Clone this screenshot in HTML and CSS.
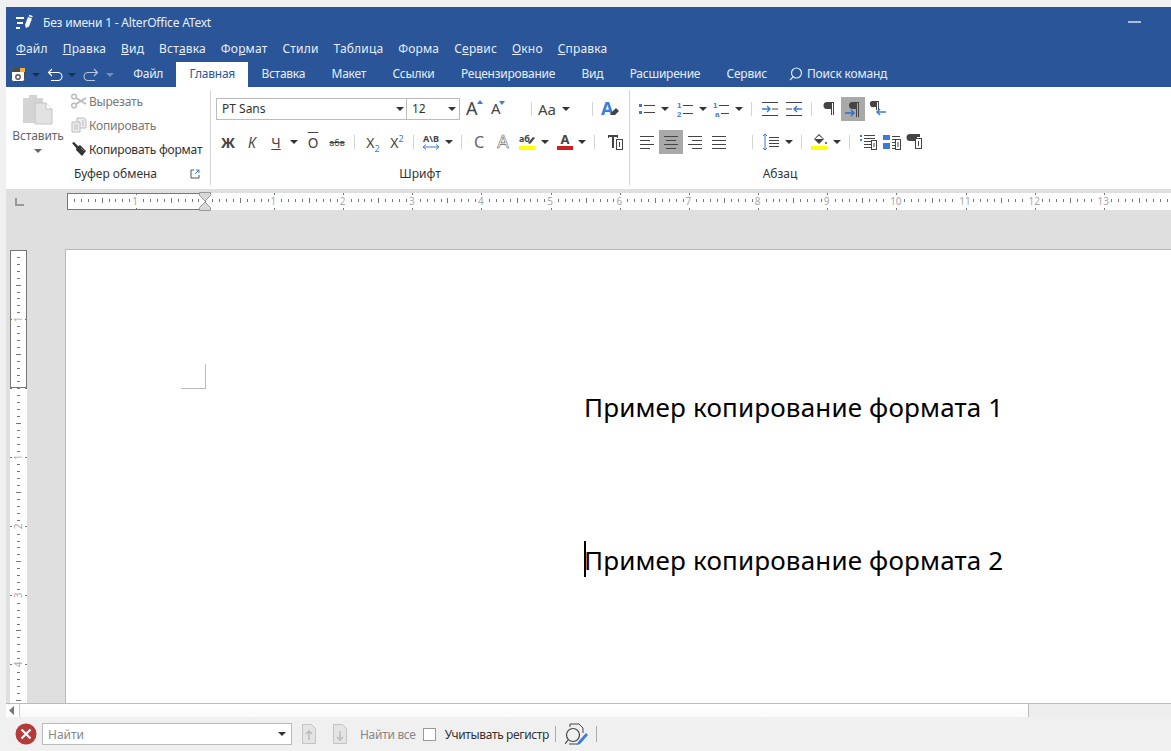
FILE: index.html
```html
<!DOCTYPE html>
<html lang="ru">

  <head>
    <meta charset="UTF-8">
    <title>Без имени 1 - AlterOffice AText</title>
    <link rel="stylesheet" href="styles.css">
  </head>

  <body>
    <svg class="defs" width="0" height="0">
      <symbol id="caret" viewBox="0 0 12 22"><path d="M2 9h8l-4 4z" fill="#333"/></symbol>
    </svg>

    <div class="chrome">
      <div class="titlebar">
        <svg class="logo" width="18" height="17" viewBox="0 0 18 17">
          <path d="M0 4h8M1 9h6M0 14h4" stroke="#fff" stroke-width="2"/>
          <path d="M9 11l3-8 4 1.500-3 8-3 1.500z" fill="#fff"/>
          <path d="M13 1.500l3.500 1.300" stroke="#fff" stroke-width="1.500"/>
        </svg>
        <span class="title">Без имени 1 - AlterOffice AText</span>
        <span class="minimize"></span>
      </div>
      <div class="menubar">
        <span><u>Ф</u>айл</span>
        <span><u>П</u>равка</span>
        <span><u>В</u>ид</span>
        <span>Вст<u>а</u>вка</span>
        <span>Фо<u>р</u>мат</span>
        <span>Стили</span>
        <span>Таблица</span>
        <span>Форма</span>
        <span>С<u>е</u>рвис</span>
        <span><u>О</u>кно</span>
        <span><u>С</u>правка</span>
      </div>
      <div class="tabbar">
        <div class="quick">
          <svg class="save" width="14" height="14" viewBox="0 0 14 14">
            <rect x="0.5" y="0.5" width="13" height="13" rx="2" fill="#fff" stroke="#4a4a4a"/>
            <path d="M1 1h12v3H1z" fill="#4a4a4a"/>
            <path d="M9 0h5v4H9z" fill="#f0b040"/>
            <circle cx="7" cy="9" r="2.200" fill="none" stroke="#555" stroke-width="1.400"/>
          </svg>
          <svg class="qcaret" width="8" height="4" viewBox="0 0 8 4"><path d="M0 0h8L4 4z" fill="#1d2f4d"/></svg>
          <svg width="16" height="14" viewBox="0 0 16 14">
            <path d="M5 1L1.500 4.500 5 8M2 4.500h9a3.500 3.500 0 0 1 0 8H4" fill="none" stroke="#fff" stroke-width="1.100"/>
          </svg>
          <svg class="qcaret" width="8" height="4" viewBox="0 0 8 4"><path d="M0 0h8L4 4z" fill="#1d2f4d"/></svg>
          <svg width="16" height="14" viewBox="0 0 16 14">
            <path d="M11 1l3.500 3.500L11 8M14 4.500H5a3.500 3.500 0 0 0 0 8h7" fill="none" stroke="#b8c6dc" stroke-width="1.100"/>
          </svg>
          <svg class="qcaret last" width="8" height="4" viewBox="0 0 8 4"><path d="M0 0h8L4 4z" fill="#7c8fae"/></svg>
        </div>
        <span class="tab">Файл</span>
        <span class="tab active">Главная</span>
        <span class="tab">Вставка</span>
        <span class="tab">Макет</span>
        <span class="tab">Ссылки</span>
        <span class="tab">Рецензирование</span>
        <span class="tab">Вид</span>
        <span class="tab">Расширение</span>
        <span class="tab">Сервис</span>
        <div class="tell">
          <svg width="14" height="14" viewBox="0 0 14 14">
            <circle cx="7.500" cy="6" r="5" fill="none" stroke="#dfe6f2" stroke-width="1.200"/>
            <path d="M4 10l-3 3" stroke="#dfe6f2" stroke-width="1.200"/>
          </svg>
          <span>Поиск команд</span>
        </div>
      </div>
    </div>

    <div class="ribbon">
      <!-- Буфер обмена -->
      <div class="group group-clip">
        <div class="clip-body">
          <div class="paste">
            <svg width="32" height="32" viewBox="0 0 32 32">
              <path d="M1 4h6V1h8v3h6v25H1z" fill="#d4d4d4"/>
              <path d="M13 9h11l6 6v15H13z" fill="#e2e2e2" stroke="#c4c4c4"/>
              <path d="M24 9v6h6" fill="#fff" stroke="#c4c4c4"/>
            </svg>
            <span>Вставить</span>
            <svg width="12" height="8" viewBox="0 0 12 8"><path d="M2 2h8L6 6z" fill="#666"/></svg>
          </div>
          <div class="clip-actions">
            <div class="clip-action off">
              <svg width="16" height="16" viewBox="0 0 16 16">
                <circle cx="3" cy="3.500" r="2.300" fill="none" stroke="#bbb" stroke-width="1.500"/>
                <circle cx="3" cy="12.500" r="2.300" fill="none" stroke="#bbb" stroke-width="1.500"/>
                <path d="M5 5l10 6M5 11l10-6" stroke="#bbb" stroke-width="1.800"/>
              </svg>
              <span>Вырезать</span>
            </div>
            <div class="clip-action off">
              <svg width="16" height="16" viewBox="0 0 16 16">
                <path d="M6 1h7l2 2v8H6z" fill="#eee" stroke="#bbb"/>
                <path d="M1 5h8v10H1z" fill="#eee" stroke="#bbb"/>
                <path d="M3 8h4M3 10h4M3 12h4M11 4h2M11 6h2M11 8h2" stroke="#bbb"/>
              </svg>
              <span>Копировать</span>
            </div>
            <div class="clip-action">
              <svg width="16" height="16" viewBox="0 0 16 16">
                <path d="M1 2l2-1 5 5-2 2z" fill="#333"/>
                <path d="M6 6l3-2 6 6-4 5-6-6z" fill="#333"/>
                <path d="M10 7l3 3" stroke="#888"/>
              </svg>
              <span>Копировать формат</span>
            </div>
          </div>
        </div>
        <div class="group-label clip-label">
          <span>Буфер обмена</span>
          <svg width="10" height="10" viewBox="0 0 10 10">
            <path d="M4 1H1v8h8V6" fill="none" stroke="#555"/>
            <path d="M5 5l4-4M6 1h3v3" fill="none" stroke="#3d7bd9"/>
          </svg>
        </div>
      </div>

      <!-- Шрифт -->
      <div class="group group-font">
        <div class="row">
          <div class="combo font-name"><span>PT Sans</span><svg width="12" height="22"><use href="#caret"/></svg></div>
          <div class="combo font-size"><span>12</span><svg width="12" height="22"><use href="#caret"/></svg></div>
          <svg class="grow" width="18" height="28" viewBox="0 -3 18 28">
            <text x="0" y="17" class="ico-text big">A</text>
            <path d="M11 6h6l-3-4z" fill="#3d7bd9"/>
          </svg>
          <svg class="shrink" width="16" height="28" viewBox="0 -3 16 28">
            <text x="1" y="16" class="ico-text">A</text>
            <path d="M9 3h6l-3 4z" fill="#3d7bd9"/>
          </svg>
          <i class="sep sep-case"></i>
          <span class="case-btn">Aa</span>
          <svg width="12" height="22"><use href="#caret"/></svg>
          <i class="sep sep-clear"></i>
          <svg class="clear" width="20" height="28" viewBox="0 -3 20 28">
            <text x="0" y="17" class="ico-text big strong blue">A</text>
            <path d="M10 15l5-5 3 3-4 4h-4z" fill="#444"/>
          </svg>
        </div>
        <div class="row row-second">
          <span class="btn letter bold">Ж</span>
          <span class="btn letter italic">К</span>
          <span class="btn letter"><span class="under">Ч</span></span>
          <svg width="12" height="22"><use href="#caret"/></svg>
          <span class="btn letter gap-over"><span class="over">О</span></span>
          <span class="btn letter"><span class="strike">абв</span></span>
          <i class="sep sep-script"></i>
          <span class="btn letter"><span>X<sub>2</sub></span></span>
          <span class="btn letter"><span>X<sup>2</sup></span></span>
          <i class="sep sep-spacing"></i>
          <svg class="btn" width="24" height="22" viewBox="0 0 24 22">
            <text x="12" y="11" text-anchor="middle" class="ico-text tiny">A\B</text>
            <path d="M4 16h16M7 13.500L4 16l3 2.500M17 13.500l3 2.500-3 2.500" fill="none" stroke="#3d7bd9"/>
          </svg>
          <svg width="12" height="22"><use href="#caret"/></svg>
          <i class="sep sep-shadow"></i>
          <span class="btn letter light">С</span>
          <svg class="btn tall" width="24" height="28" viewBox="0 -3 24 28">
            <text x="12" y="17" text-anchor="middle" class="ico-text outline">A</text>
          </svg>
          <svg class="btn" width="24" height="22" viewBox="0 0 24 22">
            <text x="4" y="11" class="ico-text tiny">аб</text>
            <path d="M13 12l5-6 2 1-5 6z" fill="#444"/>
            <path d="M4 15h16v4H4z" fill="#ffff00"/>
          </svg>
          <svg width="12" height="22"><use href="#caret"/></svg>
          <svg class="btn gap-color" width="24" height="22" viewBox="0 0 24 22">
            <text x="12" y="13" text-anchor="middle" class="ico-text strong small">A</text>
            <path d="M4 15h16v4H4z" fill="#cc2020"/>
          </svg>
          <svg class="caret-color" width="12" height="22"><use href="#caret"/></svg>
          <i class="sep sep-text"></i>
          <svg class="btn" width="24" height="22" viewBox="0 0 24 22">
            <path d="M5 4h10v3h-1v-1h-3v11H9V6H6v1H5z" fill="#444"/>
            <rect x="13.500" y="8.500" width="6" height="10" fill="#fff" stroke="#444"/>
            <path d="M16 11h1v5h-1z" fill="#444"/>
          </svg>
        </div>
        <div class="group-label">Шрифт</div>
      </div>

      <!-- Абзац -->
      <div class="group group-para">
        <div class="row">
          <svg class="btn" width="24" height="22" viewBox="0 0 24 22">
            <path d="M4 6h3v3H4zM4 13h3v3H4z" fill="#3d7bd9"/>
            <path d="M9 7.500h11M9 14.500h11" stroke="#444"/>
          </svg>
          <svg width="12" height="22"><use href="#caret"/></svg>
          <svg class="btn gap-list" width="24" height="22" viewBox="0 0 24 22">
            <text x="4" y="9.500" class="ico-num">1</text>
            <text x="4" y="18.500" class="ico-num">2</text>
            <path d="M10 7.500h10M10 15.500h10" stroke="#444"/>
          </svg>
          <svg width="12" height="22"><use href="#caret"/></svg>
          <svg class="btn" width="24" height="22" viewBox="0 0 24 22">
            <text x="4" y="9.500" class="ico-num">1</text>
            <text x="6" y="18.500" class="ico-num">a</text>
            <path d="M10 7.500h10M12 15.500h8" stroke="#444"/>
          </svg>
          <svg width="12" height="22"><use href="#caret"/></svg>
          <i class="sep sep-indent"></i>
          <svg class="btn" width="24" height="22" viewBox="0 0 24 22">
            <path d="M4 4.500h16M14 11h6M4 17.500h16" stroke="#444"/>
            <path d="M4 11h7M9 8l3 3-3 3" fill="none" stroke="#3d7bd9" stroke-width="1.400"/>
          </svg>
          <svg class="btn" width="24" height="22" viewBox="0 0 24 22">
            <path d="M4 4.500h16M4 11h6M4 17.500h16" stroke="#444"/>
            <path d="M20 11h-7M15 8l-3 3 3 3" fill="none" stroke="#3d7bd9" stroke-width="1.400"/>
          </svg>
          <i class="sep sep-pilcrow"></i>
          <svg class="btn" width="24" height="22" viewBox="0 0 24 22">
            <path d="M10 4h7v13h-1V5h-1v12h-1V11h-4a3.500 3.500 0 0 1 0-7z" fill="#444"/>
          </svg>
          <svg class="btn on" width="24" height="24" viewBox="0 0 24 24">
            <path d="M11 5h7v15h-1V6h-1v14h-1v-8h-3a3.500 3.500 0 0 1-1-7z" fill="#444"/>
            <path d="M4 16h9M10 13l3 3-3 3" fill="none" stroke="#2f6fd0" stroke-width="1.500"/>
          </svg>
          <svg class="btn after-on" width="24" height="22" viewBox="0 0 24 22">
            <path d="M7 3h7v9h-1V4h-1v8h-1V9H9a3 3 0 0 1-2-6z" fill="#444"/>
            <path d="M21 14h-9M15 11l-3 3 3 3" fill="none" stroke="#3d7bd9" stroke-width="1.500"/>
          </svg>
        </div>
        <div class="row row-second">
          <svg class="btn" width="24" height="22" viewBox="0 0 24 22">
            <path d="M5 5.500h14M5 9.500h10M5 13.500h14M5 17.500h10" stroke="#444"/>
          </svg>
          <svg class="btn on" width="24" height="24" viewBox="0 0 24 24">
            <path d="M5 6.500h14M7 10.500h10M5 14.500h14M7 18.500h10" stroke="#444"/>
          </svg>
          <svg class="btn after-on" width="24" height="22" viewBox="0 0 24 22">
            <path d="M5 5.500h14M9 9.500h10M5 13.500h14M9 17.500h10" stroke="#444"/>
          </svg>
          <svg class="btn" width="24" height="22" viewBox="0 0 24 22">
            <path d="M5 5.500h14M5 9.500h14M5 13.500h14M5 17.500h14" stroke="#444"/>
          </svg>
          <i class="sep sep-line"></i>
          <svg class="btn" width="24" height="22" viewBox="0 0 24 22">
            <path d="M10 6.500h10M10 9.500h10M10 12.500h10M10 15.500h10" stroke="#444"/>
            <path d="M6 3v16M4 5l2-2 2 2M4 17l2 2 2-2" fill="none" stroke="#3d7bd9"/>
          </svg>
          <svg class="caret-line" width="12" height="22"><use href="#caret"/></svg>
          <i class="sep sep-fill"></i>
          <svg class="btn" width="24" height="22" viewBox="0 0 24 22">
            <path d="M12 3l5 5-5 5-5-5z" fill="#444"/>
            <path d="M12 4.500L8 8h8z" fill="#fff"/>
            <circle cx="19" cy="12" r="1" fill="#444"/>
            <path d="M4 15h16v4H4z" fill="#ffff00"/>
          </svg>
          <svg width="12" height="22"><use href="#caret"/></svg>
          <i class="sep sep-frame"></i>
          <svg class="btn" width="24" height="22" viewBox="0 0 24 22">
            <path d="M5 4h2v2H5zM5 8h2v2H5z" fill="#3d7bd9"/>
            <path d="M9 4.500h11M9 7.500h11M9 10.500h7M9 13.500h7M9 16.500h7" stroke="#444"/>
            <rect x="16.500" y="9.500" width="5" height="9" fill="#fff" stroke="#444"/>
            <path d="M19 12v4" stroke="#444"/>
          </svg>
          <svg class="btn" width="24" height="22" viewBox="0 0 24 22">
            <path d="M4 4h7v5H4zM4 12h7v6H4z" fill="#3d7bd9"/>
            <path d="M13 5.500h8M13 8.500h4M13 11.500h4M13 14.500h4M13 17.500h4" stroke="#444"/>
            <rect x="16.500" y="8.500" width="5" height="10" fill="#fff" stroke="#444"/>
            <path d="M19 11v5" stroke="#444"/>
          </svg>
          <svg class="btn" width="24" height="22" viewBox="0 0 24 22">
            <path d="M7 3h10v3h-3v4H7a3.500 3.500 0 0 1 0-7z" fill="#444"/>
            <rect x="12.500" y="7.500" width="6" height="10" fill="#fff" stroke="#444"/>
            <path d="M15.500 10v5" stroke="#444"/>
          </svg>
        </div>
        <div class="group-label">Абзац</div>
      </div>
    </div>

    <div class="workspace">
      <div class="hruler-row">
        <div class="corner"></div>
        <div class="ruler-h">
          <div class="ruler-margin"></div>
          <div class="cells">
            <div class="cell"><b>1</b></div>
            <div class="cell"></div>
            <div class="cell"><b>1</b></div>
            <div class="cell"><b>2</b></div>
            <div class="cell"><b>3</b></div>
            <div class="cell"><b>4</b></div>
            <div class="cell"><b>5</b></div>
            <div class="cell"><b>6</b></div>
            <div class="cell"><b>7</b></div>
            <div class="cell"><b>8</b></div>
            <div class="cell"><b>9</b></div>
            <div class="cell"><b>10</b></div>
            <div class="cell"><b>11</b></div>
            <div class="cell"><b>12</b></div>
            <div class="cell"><b>13</b></div>
          </div>
          <svg class="hourglass" width="12" height="19" viewBox="0 0 12 19">
            <path d="M0.500 0.500h11v3L6 9 0.500 3.500z" fill="#d8d8d8" stroke="#999"/>
            <path d="M0.500 18.500h11v-3L6 10l-5.500 5.500z" fill="#d8d8d8" stroke="#999"/>
          </svg>
        </div>
      </div>
      <div class="doc-row">
        <div class="ruler-v">
          <div class="ruler-margin"></div>
          <div class="cells">
            <div class="cell"><b>1</b></div>
            <div class="cell"></div>
            <div class="cell"><b>1</b></div>
            <div class="cell"><b>2</b></div>
            <div class="cell"><b>3</b></div>
            <div class="cell"><b>4</b></div>
          </div>
        </div>
        <div class="page">
          <div class="crop-mark"></div>
          <p class="line line-one">Пример копирование формата 1</p>
          <p class="line line-two">Пример копирование формата 2</p>
        </div>
      </div>
    </div>

    <div class="hscroll">
      <svg width="11" height="13" viewBox="0 0 11 13"><path d="M8 2v9L3 6.500z" fill="#777"/></svg>
      <div class="hscroll-track"></div>
      <div class="hscroll-end"></div>
    </div>

    <div class="findbar">
      <svg class="find-close" width="22" height="22" viewBox="0 0 22 22">
        <circle cx="11" cy="11" r="10.500" fill="#b53a3a"/>
        <path d="M6.500 6.500l9 9M15.500 6.500l-9 9" stroke="#fff" stroke-width="2.200"/>
      </svg>
      <div class="find-input"><span>Найти</span><svg width="12" height="22"><use href="#caret"/></svg></div>
      <svg class="find-arrow" width="14" height="22" viewBox="0 0 14 22">
        <path d="M0.500 1.500h9l4 4v15h-13z" fill="#e4e4e4" stroke="#c4c4c4"/>
        <path d="M7 17V8M4 11l3-3 3 3" fill="none" stroke="#bbb" stroke-width="1.500"/>
      </svg>
      <svg class="find-arrow" width="14" height="22" viewBox="0 0 14 22">
        <path d="M0.500 1.500h9l4 4v15h-13z" fill="#e4e4e4" stroke="#c4c4c4"/>
        <path d="M7 8v9M4 14l3 3 3-3" fill="none" stroke="#bbb" stroke-width="1.500"/>
      </svg>
      <span class="find-all">Найти все</span>
      <i class="find-check"></i>
      <span class="find-case">Учитывать регистр</span>
      <i class="find-sep"></i>
      <svg class="find-tool" width="23" height="24" viewBox="0 0 23 24">
        <path d="M5 5V2h9l4 4v5" fill="none" stroke="#444"/>
        <circle cx="8" cy="13" r="6.500" fill="none" stroke="#444" stroke-width="1.200"/>
        <path d="M3 18l-3 4M4 22h9" stroke="#444" stroke-width="1.200"/>
        <path d="M13 20l8-9 2 2-8 9-3 1z" fill="#3d7bd9"/>
      </svg>
      <i class="find-sep"></i>
    </div>
  </body>

</html>
```

FILE: styles.css
```css
* {
  box-sizing: border-box;
}

body {
  margin: 0;
  width: 1171px;
  height: 751px;
  padding: 7px 0 0 6px;
  overflow: hidden;
  display: flex;
  flex-direction: column;
  background-color: #f0f0f0;
  color: #333;
  font-family: "Noto Sans", sans-serif;
  font-size: 12px;
}

svg {
  display: block;
  flex: none;
}

.defs {
  position: absolute;
}

/* blue top part */
.chrome {
  height: 80px;
  background-color: #2a5699;
  color: #fff;
}

.titlebar {
  height: 26px;
  display: flex;
  align-items: center;
  padding: 4px 0 0 10px;
}

.title {
  margin-left: 9px;
  color: #e8edf5;
  letter-spacing: -0.2px;
}

.minimize {
  margin-left: auto;
  margin-right: 30px;
  width: 13px;
  height: 2px;
  background-color: #a9bcd8;
}

.menubar {
  height: 29px;
  display: flex;
  align-items: center;
  gap: 15px;
  padding: 2px 0 0 10px;
  color: #e8edf5;
  letter-spacing: 0.17px;
}

.tabbar {
  height: 25px;
  display: flex;
  align-items: stretch;
}

.quick {
  width: 114px;
  display: flex;
  align-items: center;
  padding-left: 5px;
}

.save {
  margin-right: 2px;
}

.qcaret {
  margin: 1px 7px 0 5px;
}

.qcaret.last {
  margin-left: 7px;
}

.tab {
  padding: 0 13.2px 2px;
  display: flex;
  align-items: center;
  color: #e8edf5;
  letter-spacing: -0.25px;
}

.tab.active {
  background-color: #fff;
  color: #2a5699;
}

.tell {
  margin-left: 9px;
  padding-bottom: 2px;
  display: flex;
  align-items: center;
  gap: 4px;
  color: #e8edf5;
  letter-spacing: -0.2px;
}

/* ribbon */
.ribbon {
  height: 102px;
  display: flex;
  background-color: #fff;
}

.group {
  position: relative;
  margin: 3px 0 4px;
  border-right: 1px solid #d4d4d4;
  display: flex;
  flex-direction: column;
}

.group-clip {
  width: 205px;
}

.group-font {
  width: 419px;
  padding: 8px 0 0 5px;
}

.group-para {
  width: 300px;
  padding: 8px 0 0 5px;
  border-right: none;
}

.group-label {
  margin-top: auto;
  height: 19px;
  margin-left: -5px;
  text-align: center;
  line-height: 16px;
}

.row {
  height: 22px;
  display: flex;
  align-items: center;
}

.row-second {
  margin-top: 11px;
}

.sep {
  flex: none;
  width: 1px;
  height: 14px;
  background-color: #d4d4d4;
}

.clip-body {
  display: flex;
  padding: 3px 0 0 7px;
}

.paste {
  width: 50px;
  display: flex;
  flex-direction: column;
  align-items: center;
  color: #666;
  letter-spacing: -0.1px;
}

.paste svg:first-child {
  margin-top: 1px;
}

.paste span {
  margin-top: 2px;
  line-height: 16px;
}

.paste svg:last-child {
  margin-top: 3px;
}

.clip-actions {
  margin-left: 8px;
  display: flex;
  flex-direction: column;
  gap: 8px;
}

.clip-action {
  height: 16px;
  display: flex;
  align-items: center;
  gap: 2px;
  white-space: nowrap;
  letter-spacing: -0.2px;
}

.clip-action.off {
  color: #777;
}

.clip-label {
  margin-left: 0;
  padding: 0 10px 0 68px;
  display: flex;
  justify-content: space-between;
  text-align: left;
}

.clip-label svg {
  margin-top: 3px;
}

.combo {
  height: 22px;
  display: flex;
  align-items: center;
  justify-content: space-between;
  border: 1px solid #bbb;
  background-color: #fff;
  padding: 0 0 0 5px;
}

.combo span {
  margin-top: -2px;
}

.font-name {
  width: 191px;
}

.font-size {
  width: 53px;
  margin-left: 0;
  border-left: none;
  padding-right: 1px;
}

.grow {
  margin-left: 6px;
}

.shrink {
  margin-left: 6px;
}

.sep-case {
  margin-left: 25px;
}

.case-btn {
  margin-left: 6px;
  width: 22px;
  font-size: 15px;
  color: #444;
}

.sep-clear {
  margin-left: 20px;
}

.clear {
  margin-left: 8px;
}

.btn {
  flex: none;
  width: 24px;
  height: 22px;
}

.btn.tall {
  height: 28px;
}

.btn.on {
  height: 24px;
  background-color: #a9a9a9;
}

.letter {
  display: flex;
  align-items: center;
  justify-content: center;
  font-size: 14px;
  color: #444;
}

.letter sub,
.letter sup {
  font-size: 9px;
  color: #3d7bd9;
  line-height: 0;
}

.bold {
  font-weight: 700;
}

.italic {
  font-style: italic;
}

.under {
  text-decoration: underline;
}

.over {
  text-decoration: overline;
}

.strike {
  font-size: 9px;
  text-decoration: line-through;
}

.light {
  font-size: 16px;
  color: #666;
}

.gap-over {
  margin-left: 1px;
}

.sep-script {
  margin: 0 6px 0 5px;
}

.sep-spacing {
  margin: 0 5px 0 4px;
}

.sep-shadow {
  margin: 0 5px 0 6px;
}

.gap-color {
  margin-left: 2px;
}

.caret-color {
  margin-left: -1px;
}

.sep-text {
  margin: 0 8px 0 6px;
}

.ico-text {
  font-family: "Noto Sans", sans-serif;
  font-size: 15px;
  fill: #444;
}

.ico-text.big {
  font-size: 18px;
}

.ico-text.tiny {
  font-size: 9px;
  font-weight: 700;
}

.ico-text.small {
  font-size: 13px;
}

.ico-text.strong {
  font-weight: 700;
}

.ico-text.blue {
  fill: #3d7bd9;
}

.ico-text.outline {
  font-size: 18px;
  fill: #fff;
  stroke: #666;
  stroke-width: 0.6;
}

.ico-num {
  font-family: "Liberation Sans", sans-serif;
  font-size: 8px;
  font-weight: 700;
  fill: #3d7bd9;
}

.gap-list {
  margin-left: 2px;
}

.sep-indent {
  margin: 0 6px 0 6px;
}

.sep-pilcrow {
  margin: 0 5px 0 5px;
}

.sep-line {
  margin-left: 21px;
  margin-right: 6px;
}

.caret-line {
  margin-left: 0;
}

.sep-fill {
  margin: 0 5px 0 6px;
}

.sep-frame {
  margin: 0 5px 0 6px;
}

/* rulers and page */
.workspace {
  flex: 1;
  min-height: 0;
  background-color: #dfdfdf;
  overflow: hidden;
}

.hruler-row {
  display: flex;
  padding-top: 4px;
}

.corner {
  flex: none;
  width: 61px;
  height: 17px;
  position: relative;
}

.corner:before {
  content: "";
  position: absolute;
  left: 9px;
  top: 5px;
  width: 7px;
  height: 6px;
  border-left: 2px solid #999;
  border-bottom: 2px solid #999;
}

.ruler-h,
.ruler-v {
  position: relative;
  background-color: #fff;
  background-repeat: no-repeat;
}

.ruler-h {
  flex: 1;
  min-width: 0;
  height: 17px;
  background-image:
    repeating-linear-gradient(90deg, #777 0 1px, transparent 1px 6.917px),
    repeating-linear-gradient(90deg, transparent 0 34.58px, #777 34.58px 35.58px, transparent 35.58px 69.17px);
  background-size: 100% 3px, 100% 5px;
  background-position: 0 6px, 0 5px;
}

.ruler-v {
  width: 17px;
  height: 454px;
  flex: none;
  margin: 1px 38px 0 0;
  background-image:
    repeating-linear-gradient(180deg, #777 0 1px, transparent 1px 6.917px),
    repeating-linear-gradient(180deg, transparent 0 34.58px, #777 34.58px 35.58px, transparent 35.58px 69.17px);
  background-size: 3px 100%, 5px 100%;
  background-position: 7px 0, 6px 0;
}

.ruler-margin {
  position: absolute;
  left: 0;
  top: 0;
  border: 1px solid #777;
}

.ruler-h .ruler-margin {
  width: 138px;
  height: 17px;
  border-right: none;
}

.ruler-v .ruler-margin {
  width: 17px;
  height: 138px;
}

.cells {
  display: flex;
}

.ruler-h .cells {
  padding-left: 34.58px;
  height: 17px;
}

.ruler-v .cells {
  flex-direction: column;
  padding-top: 34.58px;
  width: 17px;
}

.cell {
  flex: none;
  display: flex;
  align-items: center;
  justify-content: center;
  color: #a8a8a8;
  font-size: 10px;
  background-repeat: no-repeat;
  background-image: linear-gradient(#777, #777), linear-gradient(#777, #777);
}

.ruler-h .cell {
  width: 69.17px;
  height: 17px;
  background-size: 1px 2px;
  background-position: center top, center bottom;
}

.ruler-v .cell {
  width: 17px;
  height: 69.17px;
  background-size: 2px 1px;
  background-position: left center, right center;
}

.cell b {
  font-weight: 400;
  line-height: 11px;
  background-color: #fff;
}

.ruler-h .cell b {
  margin-right: 2px;
}

.ruler-v .cell b {
  transform: rotate(-90deg);
}

.hourglass {
  position: absolute;
  left: 132px;
  top: -1px;
}

.doc-row {
  display: flex;
  height: 493px;
  padding: 39px 0 0 4px;
}

.page {
  flex: 1;
  position: relative;
  height: 460px;
  border-top: 1px solid #b8b8b8;
  border-left: 1px solid #b8b8b8;
  background-color: #fff;
  padding-left: 518px;
  color: #000;
}

.crop-mark {
  position: absolute;
  left: 115px;
  top: 114px;
  width: 25px;
  height: 25px;
  border-right: 1px solid #bbb;
  border-bottom: 1px solid #bbb;
}

.line {
  position: relative;
  margin: 0;
  font-size: 26px;
  line-height: 36px;
  letter-spacing: 0.16px;
  white-space: nowrap;
}

.line-one {
  margin-top: 139px;
}

.line-two {
  margin-top: 117px;
}

.line-two:before {
  content: "";
  position: absolute;
  left: 0;
  top: -1px;
  width: 2px;
  height: 36px;
  background-color: #000;
}

/* bottom bars */
.hscroll {
  height: 14px;
  display: flex;
  align-items: center;
  border-top: 1px solid #bbb;
  background-color: #fff;
}

.hscroll-track {
  flex: none;
  width: 1009px;
  height: 13px;
  border-left: 1px solid #ccc;
  margin-left: 2px;
  background: linear-gradient(#fff, #fafafa);
}

.hscroll-end {
  flex: 1;
  height: 13px;
  background-color: #eee;
  border-left: 1px solid #bbb;
}

.findbar {
  height: 34px;
  display: flex;
  align-items: center;
  padding-left: 9px;
}

.find-input {
  width: 250px;
  height: 22px;
  margin-left: 5px;
  padding: 0 3px 0 5px;
  display: flex;
  align-items: center;
  justify-content: space-between;
  background-color: #fff;
  border: 1px solid #bbb;
  color: #888;
}

.find-arrow {
  margin-left: 10px;
}

.find-arrow + .find-arrow {
  margin-left: 17px;
}

.find-all {
  margin-left: 13px;
  color: #888;
  letter-spacing: -0.3px;
}

.find-check {
  width: 13px;
  height: 13px;
  margin-left: 7px;
  background-color: #fff;
  border: 1px solid #999;
}

.find-case {
  margin-left: 9px;
  white-space: nowrap;
  letter-spacing: -0.35px;
}

.find-sep {
  width: 1px;
  height: 16px;
  margin-left: 6px;
  background-color: #aaa;
}

.find-tool {
  margin: 0 2px 0 9px;
}
```
